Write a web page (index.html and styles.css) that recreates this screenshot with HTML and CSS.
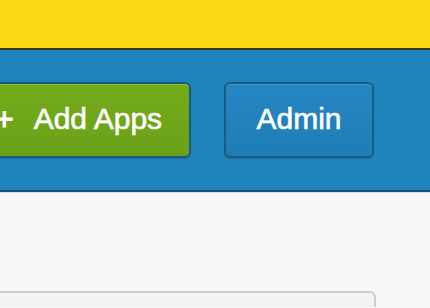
FILE: index.html
```html
<!DOCTYPE html>
<html>
<head>
<meta charset="utf-8">
<link rel="stylesheet" href="styles.css">
</head>
<body>
<div class="topbar"></div>
<nav class="nav">
  <a class="btn btn-green"><span class="plus">+</span>Add Apps</a>
  <a class="btn btn-blue">Admin</a>
</nav>
<main class="main">
  <div class="panel"></div>
</main>
</body>
</html>
```
FILE: styles.css
```css
html, body {
  margin: 0;
  padding: 0;
}
body {
  background: #f8f8f8;
  font-family: "Liberation Sans", Arial, sans-serif;
  overflow: hidden;
}
.topbar {
  height: 48px;
  background: #f9d913;
  border-bottom: 2px solid #3d3b15;
}
.nav {
  background: #2183bb;
  padding: 32px 0;
  border-bottom: 2px solid #1a5578;
  box-shadow: 0 1px 0 #dedede;
  display: flex;
  gap: 33px;
  margin-left: -34px;
}
.btn {
  box-sizing: border-box;
  height: 76px;
  display: flex;
  align-items: center;
  justify-content: center;
  padding-bottom: 2px;
  color: #fff;
  font-size: 30px;
  -webkit-text-stroke: 0.6px #fff;
  border: 2px solid #1b5b82;
  border-radius: 6px;
}
.btn-green {
  width: 225px;
  background: linear-gradient(#74ab19, #6ba11a);
  box-shadow: inset 0 1px 0 #8cc02f, 0 1px 1px rgba(0,0,0,0.15);
}
.plus {
  margin-right: 20px;
  font-size: 32px;
  -webkit-text-stroke: 1px #fff;
}
.btn-blue {
  width: 150px;
  background: linear-gradient(#2587c4, #1f7db5);
  box-shadow: inset 0 1px 0 #3d95cc, 0 1px 1px rgba(0,0,0,0.15);
}
.main {
  padding-top: 99px;
}
.panel {
  margin-left: -10px;
  width: 386px;
  height: 16px;
  box-sizing: border-box;
  background: #f2f2f2;
  border: 2px solid #cdcdcd;
  border-bottom: 0;
  border-radius: 6px 6px 0 0;
}
```
